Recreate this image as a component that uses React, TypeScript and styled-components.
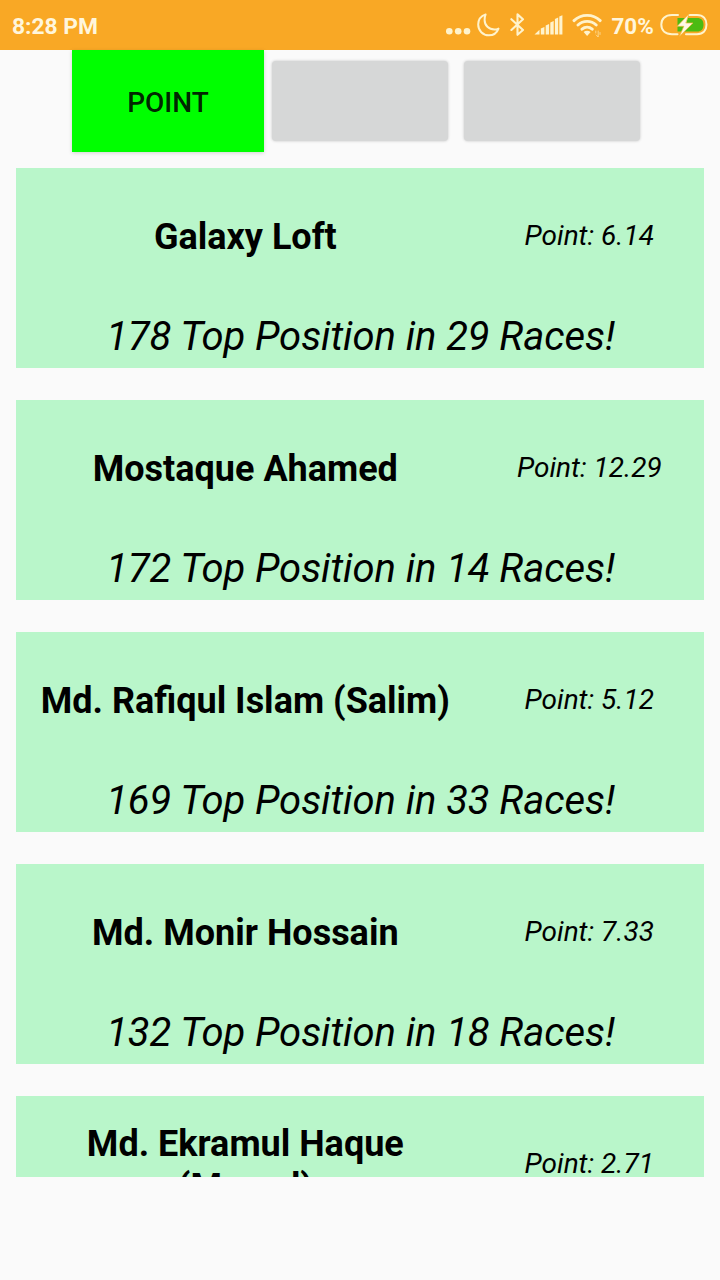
import React from "react";
import styled, { createGlobalStyle } from "styled-components";

const GlobalStyle = createGlobalStyle`
  * { box-sizing: border-box; }
  body { margin: 0; background: #fafafa; font-family: Roboto, sans-serif; color: #000; }
`;

const Screen = styled.div`
  width: 720px;
  height: 1280px;
  overflow: hidden;
  display: flex;
  flex-direction: column;
  background: #fafafa;
`;

const StatusBar = styled.header`
  flex: none;
  height: 50px;
  padding: 2px 11px 0 12px;
  display: flex;
  align-items: center;
  justify-content: space-between;
  background: #f9a825;
  color: #fff6dc;
`;

const StatusText = styled.span<{ $width: number; $size: number }>`
  width: ${(p) => p.$width}px;
  font-size: ${(p) => p.$size}px;
  font-weight: 700;
  line-height: 28px;
  white-space: nowrap;
`;

const Clock = styled(StatusText)`
  padding-top: 1px;
`;

const StatusIcons = styled.div`
  display: flex;
  align-items: center;
`;

const Icon = styled.svg<{ $gap?: number }>`
  display: block;
  flex: none;
  margin-right: ${(p) => p.$gap ?? 0}px;
  fill: none;
  stroke: #fff3cc;
  stroke-linecap: round;
  stroke-linejoin: round;
`;

const Tabs = styled.nav`
  flex: none;
  display: flex;
  justify-content: center;
  height: 102px;
`;

const ActiveTab = styled.button`
  width: 192px;
  height: 102px;
  padding: 2px 0 0;
  border: 0;
  background: #00ff00;
  color: rgba(0, 0, 0, 0.87);
  font: 500 28px/33px Roboto, sans-serif;
  box-shadow: 0 1px 4px rgba(0, 0, 0, 0.16);
`;

const BlankTab = styled.button`
  width: 176px;
  height: 80px;
  margin: 11px 8px 0;
  padding: 0;
  border: 0;
  border-radius: 4px;
  background: #d6d7d7;
  box-shadow: 0 0 3px rgba(0, 0, 0, 0.22);
`;

const List = styled.main`
  flex: none;
  height: 1025px;
  padding: 16px 16px 0;
  overflow: hidden;
  display: flex;
  flex-direction: column;
  gap: 32px;
`;

const Card = styled.article`
  flex: none;
  height: 200px;
  background: #b9f6ca;
`;

const CardTop = styled.div`
  height: 136px;
  display: grid;
  grid-template-columns: 2fr 1fr;
  align-items: center;
  text-align: center;
`;

const Name = styled.h2`
  margin: 0;
  padding: 3px 16px 0;
  font-size: 36px;
  font-weight: 700;
  line-height: 42.5px;
`;

const Point = styled.span`
  padding-bottom: 2px;
  font-size: 28px;
  font-style: italic;
  line-height: 33px;
`;

const Summary = styled.p`
  margin: 0;
  padding: 9px 0 0 1px;
  font-size: 40px;
  font-style: italic;
  letter-spacing: -0.07px;
  line-height: 47px;
  text-align: center;
  white-space: nowrap;
`;

const lofts = [
  { name: "Galaxy Loft", point: "6.14", top: 178, races: 29 },
  { name: "Mostaque Ahamed", point: "12.29", top: 172, races: 14 },
  { name: "Md. Rafiqul Islam (Salim)", point: "5.12", top: 169, races: 33 },
  { name: "Md. Monir Hossain", point: "7.33", top: 132, races: 18 },
  { name: "Md. Ekramul Haque (Masud)", point: "2.71", top: 130, races: 48 },
];

const Dots = () => (
  <Icon width="26" height="30" viewBox="0 0 26 30" $gap={6}>
    <g fill="#fff3cc" stroke="none">
      <circle cx="4.3" cy="20.3" r="3.3" />
      <circle cx="13.2" cy="20.3" r="3.3" />
      <circle cx="22" cy="20.3" r="3.3" />
    </g>
  </Icon>
);

const Moon = () => (
  <Icon width="24" height="30" viewBox="0 0 24 30" strokeWidth="2" $gap={9}>
    <path d="M8.6 3.4C4 5 1.2 9 1.2 13.6c0 6 4.7 10.7 10.6 10.7 4.6 0 8.2-2.6 9.7-6.7-1.4.7-2.7 1-4.1 1-5.6 0-9.8-4.2-9.8-9.6 0-2 .3-3.9 1-5.6z" />
  </Icon>
);

const Bluetooth = () => (
  <Icon width="15" height="30" viewBox="0 0 15 30" strokeWidth="2.1" $gap={9}>
    <path d="M1.4 8.2 13 19 7.5 23.8V3.4L13 8.2 1.4 19" />
  </Icon>
);

const Signal = () => (
  <Icon width="29" height="30" viewBox="0 0 29 30" $gap={9}>
    <path
      fill="#fff3cc"
      stroke="none"
      d="M.5 23.5 5.5 18.8v4.7zM6.8 17.5l3.6-1.5v7.5H6.8zM11.7 14.500l3.4-1.5v10.5h-3.400zM16.3 11.5l3.4-1.5v13.5h-3.4zM20.9 8l3.3-1.5v17h-3.3zM25.3 5.5l3.1-1.3v19.3h-3.1z"
    />
  </Icon>
);

const Wifi = () => (
  <Icon width="30" height="30" viewBox="0 0 30 30" strokeWidth="2.9" $gap={10}>
    <path d="M2 9.6c7.2-7 19-7 26.2 0M6 14c5.2-4.9 13-4.9 18.2 0M10 18.2c3-2.7 7.2-2.7 10.2 0" />
    <path fill="#fff3cc" stroke="none" d="M11.6 21c2-1.6 5-1.6 7 0L15.1 25z" />
    <path strokeWidth="1" strokeOpacity=".6" d="M23.8 22v-2M26.2 20v6l-2-2M28 21.5v2" />
  </Icon>
);

const Battery = () => (
  <Icon width="50" height="30" viewBox="0 0 50 30" strokeWidth="2">
    <path d="M19 4h-6C6 4 2.3 8 2.3 13.6S6 23.2 13 23.2h5.5M30 4h8c6.3 0 9.5 4 9.5 9.6s-3.2 9.6-9.5 9.6H27" />
    <path fill="#4cbb13" stroke="none" d="M18.5 7H38c4.5 0 6.5 2.7 6.5 6.700S42.5 20.5 38 20.5H18.5z" />
    <path fill="#fff9e8" stroke="#f6b83a" strokeWidth=".7" d="M29.7 3.3 18.2 15.3h6.6L20.5 25.3 34 12h-6.8z" />
  </Icon>
);

export default function App() {
  return (
    <Screen>
      <GlobalStyle />
      <StatusBar>
        <Clock $width={90} $size={22.8}>8:28 PM</Clock>
        <StatusIcons>
          <Dots />
          <Moon />
          <Bluetooth />
          <Signal />
          <Wifi />
          <StatusText $width={47.5} $size={22.4}>70%</StatusText>
          <Battery />
        </StatusIcons>
      </StatusBar>
      <Tabs>
        <ActiveTab>POINT</ActiveTab>
        <BlankTab />
        <BlankTab />
      </Tabs>
      <List>
        {lofts.map((loft) => (
          <Card key={loft.name}>
            <CardTop>
              <Name>{loft.name}</Name>
              <Point>Point: {loft.point}</Point>
            </CardTop>
            <Summary>
              {loft.top} Top Position in {loft.races} Races!
            </Summary>
          </Card>
        ))}
      </List>
    </Screen>
  );
}
